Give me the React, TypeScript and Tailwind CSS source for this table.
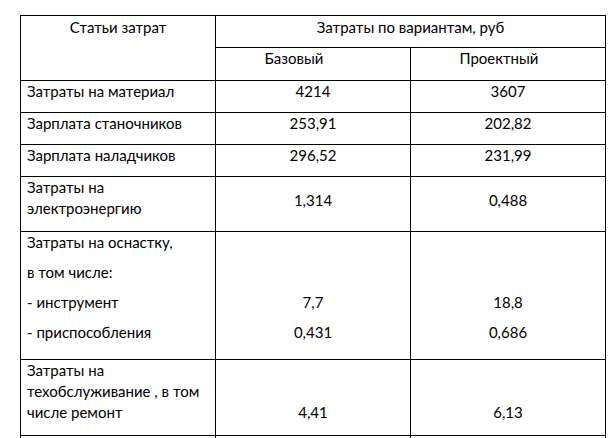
import React from 'react';

interface CostRow {
  label: string[];
  base: string[];
  project: string[];
  height: string;
  kind: 'top' | 'middle' | 'list';
}

const rows: CostRow[] = [
  { label: ['Затраты на материал'], base: ['4214'], project: ['3607'], height: 'h-[32px]', kind: 'top' },
  { label: ['Зарплата станочников'], base: ['253,91'], project: ['202,82'], height: 'h-[32px]', kind: 'top' },
  { label: ['Зарплата наладчиков'], base: ['296,52'], project: ['231,99'], height: 'h-[32px]', kind: 'top' },
  { label: ['Затраты на', 'электроэнергию'], base: ['1,314'], project: ['0,488'], height: 'h-[55px]', kind: 'middle' },
  {
    label: ['Затраты на оснастку,', 'в том числе:', '- инструмент', '- приспособления'],
    base: ['', '', '7,7', '0,431'],
    project: ['', '', '18,8', '0,686'],
    height: 'h-[128px]',
    kind: 'list',
  },
  {
    label: ['Затраты на', 'техобслуживание , в том', 'числе ремонт'],
    base: ['', '', '4,41'],
    project: ['', '', '6,13'],
    height: 'h-[76px]',
    kind: 'top',
  },
];

const Lines: React.FC<{ lines: string[]; spaced?: boolean }> = ({ lines, spaced }) => (
  <>
    {lines.map((line, i) => (
      <div key={i} className={spaced ? 'h-[30px]' : 'h-[21px]'}>
        {line || '\u00a0'}
      </div>
    ))}
  </>
);

const App: React.FC = () => {
  const cell = 'border border-black px-[6px] pt-0 pb-0';

  return (
    <div className="h-[438px] w-[616px] overflow-hidden bg-white pl-[20px] pt-[15px] font-['Lato',sans-serif] text-[15px] leading-[21px] text-black">
      <table className="w-[585px] table-fixed border-collapse">
        <colgroup>
          <col className="w-[195px]" />
          <col className="w-[195px]" />
          <col className="w-[195px]" />
        </colgroup>
        <thead>
          <tr>
            <th rowSpan={2} className={`${cell} pt-[1px] text-center align-top font-normal`}>
              Статьи затрат
            </th>
            <th colSpan={2} className={`${cell} h-[32px] pt-[1px] text-center align-top font-normal`}>
              Затраты по вариантам, руб
            </th>
          </tr>
          <tr>
            <th className={`${cell} h-[33px] pr-[44px] text-center align-top font-normal`}>Базовый</th>
            <th className={`${cell} h-[33px] pr-[24px] text-center align-top font-normal`}>Проектный</th>
          </tr>
        </thead>
        <tbody>
          {rows.map((row, i) => {
            const spaced = row.kind === 'list';
            const valueAlign = row.kind === 'middle' ? 'align-middle pb-[8px]' : 'align-top';
            return (
              <tr key={i}>
                <td className={`${cell} ${row.height} align-top`}>
                  <Lines lines={row.label} spaced={spaced} />
                </td>
                <td className={`${cell} ${valueAlign} text-center`}>
                  <Lines lines={row.base} spaced={spaced} />
                </td>
                <td className={`${cell} ${valueAlign} text-center`}>
                  <Lines lines={row.project} spaced={spaced} />
                </td>
              </tr>
            );
          })}
          <tr>
            <td className={`${cell} h-[40px]`}></td>
            <td className={cell}></td>
            <td className={cell}></td>
          </tr>
        </tbody>
      </table>
    </div>
  );
};

export default App;
